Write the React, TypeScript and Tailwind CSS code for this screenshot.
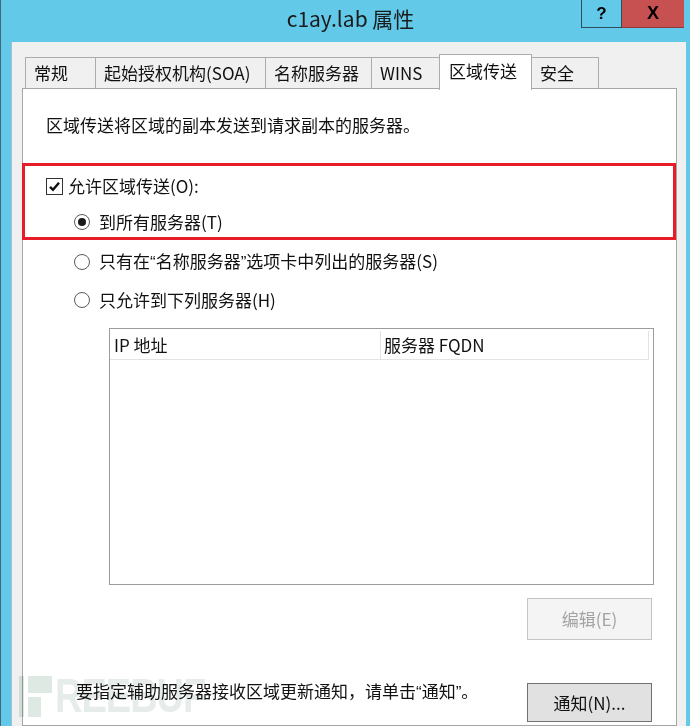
import React from 'react';

const font = "font-['Noto_Sans_CJK_SC','Liberation_Sans',sans-serif]";
const q = "font-['Liberation_Sans',sans-serif]";

const tabs = [
  { name: '常规', w: 'w-[71px]' },
  { name: '起始授权机构(SOA)', w: 'w-[171px]' },
  { name: '名称服务器', w: 'w-[107px]' },
  { name: 'WINS', w: 'w-[69px]' },
  { name: '区域传送', w: 'w-[93px]', active: true },
  { name: '安全', w: 'w-[68px]' },
];

function Radio({ checked }: { checked?: boolean }) {
  return (
    <span className="flex h-[16px] w-[16px] shrink-0 items-center justify-center rounded-full border border-[#5a5a5a] bg-white">
      {checked && <span className="h-[8px] w-[8px] rounded-full bg-[#1a1a1a]" />}
    </span>
  );
}

function Checkbox() {
  return (
    <span className="flex h-[17px] w-[17px] shrink-0 items-center justify-center border border-[#333] bg-white">
      <svg width="13" height="13" viewBox="0 0 13 13">
        <path d="M2 6.8 L5 9.8 L11 2.8" fill="none" stroke="#111" strokeWidth="2.4" />
      </svg>
    </span>
  );
}

export default function App() {
  return (
    <div className={`${font} relative flex h-[726px] w-[690px] flex-col overflow-hidden border-l border-[#46677a] bg-[#62c9e9] text-[17px] text-[#111]`}>
      {/* Title bar */}
      <div className="flex h-[42px] shrink-0 items-center justify-center pb-[4px] pl-[10px] text-[21px] text-[#1b1b1b]">
        c1ay.lab 属性
      </div>
      <div className="absolute right-[6px] top-0 flex">
        <div className="flex h-[28px] w-[41px] items-center justify-center border-x border-b border-[#2d4c5c] font-['Liberation_Sans',sans-serif] text-[17px] font-bold text-black">
          ?
        </div>
        <div className="flex h-[28px] w-[62px] items-center justify-center border-b border-[#8a3a3a] bg-[#c75050] font-['Liberation_Sans',sans-serif] text-[18px] font-bold text-black">
          X
        </div>
      </div>

      {/* Window body */}
      <div className="ml-[10px] mr-[4px] flex flex-1 flex-col border-l border-[#9cc3d4] bg-[#f0f0f0] pt-[12px]">
        {/* Tabs */}
        <div className="flex items-end pl-[13px]">
          {tabs.map((t, i) =>
            t.active ? (
              <div
                key={t.name}
                className={`relative z-10 -mb-[2px] -ml-px flex h-[36px] ${t.w} items-start border-x border-t border-[#acacac] bg-white pl-[9px] pt-[3px] leading-[26px]`}
              >
                {t.name}
              </div>
            ) : (
              <div
                key={t.name}
                className={`flex h-[31px] ${t.w} items-center border-x border-t border-[#acacac] bg-[#f0f0f0] pl-[8px] ${i > 0 ? '-ml-px' : ''}`}
              >
                {t.name}
              </div>
            )
          )}
        </div>

        {/* Tab panel */}
        <div className="ml-[10px] mr-[9px] flex flex-1 flex-col border border-[#a6a6a6] bg-white">
          <div className="mt-[25px] h-[22px] pl-[23px] leading-[22px]">区域传送将区域的副本发送到请求副本的服务器。</div>

          <div className="-ml-px mt-[27px] border-[3px] border-[#e81c28] pb-[4px] pt-[9px]">
            <div className="flex h-[22px] items-center gap-[5px] pl-[21px]">
              <Checkbox />
              <span className="leading-[22px]">允许区域传送(O):</span>
            </div>
            <div className="mt-[14px] flex h-[22px] items-center gap-[9px] pl-[49px]">
              <Radio checked />
              <span className="leading-[22px]">到所有服务器(T)</span>
            </div>
          </div>

          <div className="mt-[11px] flex h-[22px] items-center gap-[9px] pl-[51px]">
            <Radio />
            <span className="leading-[22px]">
              只有在<span className={q}>“</span>名称服务器<span className={q}>”</span>选项卡中列出的服务器(S)
            </span>
          </div>
          <div className="mt-[16px] flex h-[22px] items-center gap-[9px] pl-[51px]">
            <Radio />
            <span className="leading-[22px]">只允许到下列服务器(H)</span>
          </div>

          {/* Server list */}
          <div className="ml-[86px] mt-[17px] h-[257px] w-[545px] shrink-0 border border-[#9c9c9c] bg-white pr-[4px] pt-[2px]">
            <div className="flex h-[29px] border-b border-[#e3e3e3]">
              <div className="flex w-[271px] items-center border-r border-[#e3e3e3] pl-[4px]">IP 地址</div>
              <div className="flex flex-1 items-center border-r border-[#e3e3e3] pl-[3px]">服务器 FQDN</div>
            </div>
          </div>

          <div className="mt-[13px] flex justify-end pr-[24px]">
            <div className="flex h-[42px] w-[125px] items-center justify-center border border-[#c4c4c4] bg-[#f4f4f4] text-[#a3a3a3]">
              编辑(E)
            </div>
          </div>

          <div className="relative z-10 mt-[40px] flex items-start justify-between pl-[53px] pr-[24px]">
            <span className="h-[22px] leading-[22px]">
              要指定辅助服务器接收区域更新通知，请单击<span className={q}>“</span>通知<span className={q}>”</span>。
            </span>
            <div className="mt-[3px] flex h-[39px] w-[125px] items-center justify-center border border-[#707070] bg-[#e1e1e1]">
              通知(N)...
            </div>
          </div>
        </div>
      </div>

      {/* Watermark */}
      <div className="pointer-events-none absolute left-[18px] top-[676px] z-20 flex items-end gap-[3px] mix-blend-multiply">
        <svg width="33" height="41" viewBox="0 0 33 41">
          <rect x="0" y="0" width="5" height="41" fill="#dfe9e4" />
          <rect x="9" y="0" width="24" height="17" fill="#dfe9e4" />
          <rect x="9" y="21" width="13" height="20" fill="#dfe9e4" />
        </svg>
        <span className="origin-bottom scale-y-125 font-['Liberation_Sans',sans-serif] text-[38px] font-bold leading-[33px] tracking-[-1px] text-[#e6ece9]">
          REEBUF
        </span>
      </div>
    </div>
  );
}
